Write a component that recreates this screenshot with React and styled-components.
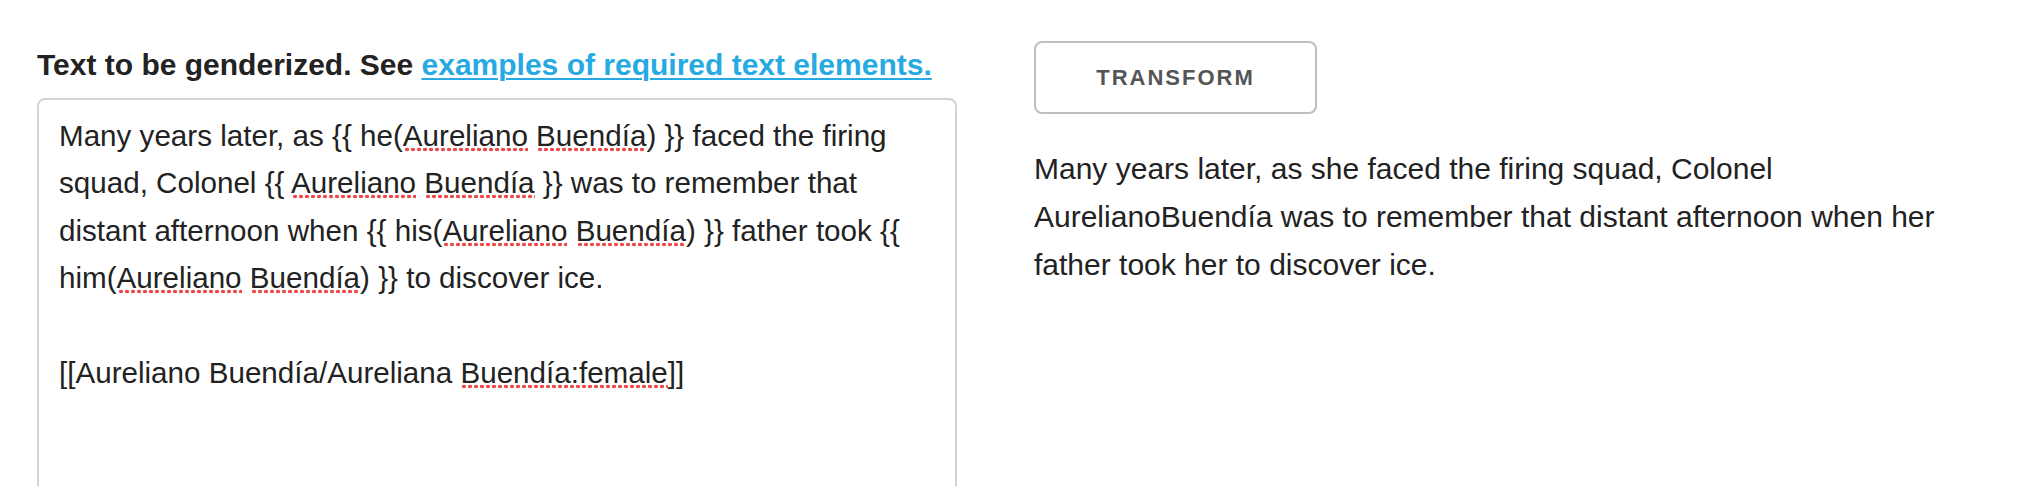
import React from 'react';
import styled, { createGlobalStyle } from 'styled-components';

const GlobalStyle = createGlobalStyle`
  html, body {
    margin: 0;
    padding: 0;
    background: #fff;
  }
  body {
    font-family: 'Liberation Sans', Arial, Helvetica, sans-serif;
    color: #222;
  }
`;

const Page = styled.div`
  display: flex;
  align-items: flex-start;
  gap: 77px;
  padding: 41px 0 0 37px;
  height: 486px;
  box-sizing: border-box;
  overflow: hidden;
`;

const InputColumn = styled.div`
  display: flex;
  flex-direction: column;
  width: 920px;
`;

const Label = styled.label`
  font-size: 30px;
  font-weight: 700;
  line-height: 48px;
  color: #222;
  margin-bottom: 9px;
`;

const HelpLink = styled.a`
  color: #27aae1;
  text-decoration: underline;
  text-decoration-thickness: 2px;
  text-underline-offset: 3px;
`;

const Editor = styled.div`
  box-sizing: border-box;
  width: 100%;
  height: 420px;
  padding: 12px 20px;
  border: 2px solid #d3d3d3;
  border-radius: 8px;
  font-size: 29.6px;
  line-height: 1.6;
  color: #222;
  white-space: pre-wrap;
  background: #fff;
`;

// macOS style spell-check dots under unknown words
const Misspelled = styled.span`
  background-image: radial-gradient(circle, #f04848 1.7px, transparent 2.1px);
  background-size: 6px 5px;
  background-repeat: repeat-x;
  background-position: 1px 100%;
`;

const OutputColumn = styled.div`
  display: flex;
  flex-direction: column;
  align-items: flex-start;
  width: 950px;
`;

const TransformButton = styled.button`
  box-sizing: border-box;
  width: 283px;
  height: 73px;
  background: #fff;
  border: 2px solid #bfbfbf;
  border-radius: 8px;
  font-family: 'Liberation Sans', Arial, sans-serif;
  font-size: 22px;
  font-weight: 700;
  letter-spacing: 2px;
  color: #555;
  text-transform: uppercase;
  cursor: pointer;
`;

const Result = styled.p`
  margin: 31px 0 0;
  font-size: 30px;
  line-height: 48px;
  color: #222;
`;

const Name = ({ first = 'Aureliano', last = 'Buendía' }) => (
  <>
    <Misspelled>{first}</Misspelled> <Misspelled>{last}</Misspelled>
  </>
);

export default function App() {
  return (
    <>
      <GlobalStyle />
      <Page>
        <InputColumn>
          <Label>
            Text to be genderized. See{' '}
            <HelpLink href="#examples">examples of required text elements.</HelpLink>
          </Label>
          <Editor role="textbox" aria-multiline="true">
            Many years later, as {'{{'} he(<Name />) {'}}'} faced the firing squad, Colonel{' '}
            {'{{'} <Name /> {'}}'} was to remember that distant afternoon when {'{{'} his(
            <Name />) {'}}'} father took {'{{'} him(<Name />) {'}}'} to discover ice.
            {'\n\n'}[[Aureliano Buendía/Aureliana <Misspelled>Buendía:female</Misspelled>]]
          </Editor>
        </InputColumn>
        <OutputColumn>
          <TransformButton>Transform</TransformButton>
          <Result>
            Many years later, as she faced the firing squad, Colonel AurelianoBuendía was to
            remember that distant afternoon when her father took her to discover ice.
          </Result>
        </OutputColumn>
      </Page>
    </>
  );
}
